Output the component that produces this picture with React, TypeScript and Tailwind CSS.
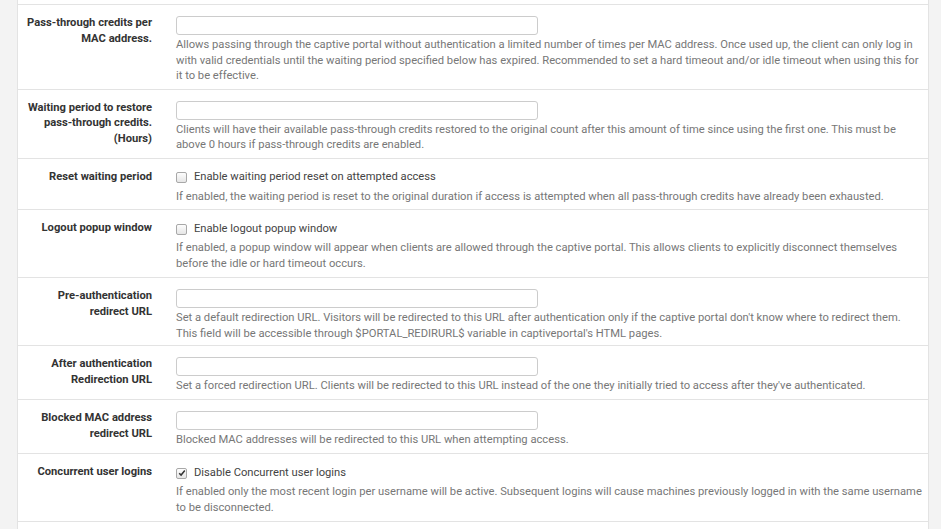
import React from "react";

type Row = {
  label: string;
  kind: "input" | "checkbox";
  checkText?: string;
  checked?: boolean;
  pb: string;
  help: string;
};

const rows: Row[] = [
  {
    label: "Pass-through credits per MAC address.",
    kind: "input",
    pb: "pb-[5px]",
    help: "Allows passing through the captive portal without authentication a limited number of times per MAC address. Once used up, the client can only log in with valid credentials until the waiting period specified below has expired. Recommended to set a hard timeout and/or idle timeout when using this for it to be effective.",
  },
  {
    label: "Waiting period to restore pass-through credits. (Hours)",
    kind: "input",
    pb: "pb-[5px]",
    help: "Clients will have their available pass-through credits restored to the original count after this amount of time since using the first one. This must be above 0 hours if pass-through credits are enabled.",
  },
  {
    label: "Reset waiting period",
    kind: "checkbox",
    checkText: "Enable waiting period reset on attempted access",
    pb: "pb-[5px]",
    help: "If enabled, the waiting period is reset to the original duration if access is attempted when all pass-through credits have already been exhausted.",
  },
  {
    label: "Logout popup window",
    kind: "checkbox",
    checkText: "Enable logout popup window",
    pb: "pb-[6px]",
    help: "If enabled, a popup window will appear when clients are allowed through the captive portal. This allows clients to explicitly disconnect themselves before the idle or hard timeout occurs.",
  },
  {
    label: "Pre-authentication redirect URL",
    kind: "input",
    pb: "pb-[4px]",
    help: "Set a default redirection URL. Visitors will be redirected to this URL after authentication only if the captive portal don't know where to redirect them. This field will be accessible through $PORTAL_REDIRURL$ variable in captiveportal's HTML pages.",
  },
  {
    label: "After authentication Redirection URL",
    kind: "input",
    pb: "pb-[5.5px]",
    help: "Set a forced redirection URL. Clients will be redirected to this URL instead of the one they initially tried to access after they've authenticated.",
  },
  {
    label: "Blocked MAC address redirect URL",
    kind: "input",
    pb: "pb-[5.5px]",
    help: "Blocked MAC addresses will be redirected to this URL when attempting access.",
  },
  {
    label: "Concurrent user logins",
    kind: "checkbox",
    checkText: "Disable Concurrent user logins",
    checked: true,
    pb: "pb-[6px]",
    help: "If enabled only the most recent login per username will be active. Subsequent logins will cause machines previously logged in with the same username to be disconnected.",
  },
];

function Checkbox({ checked }: { checked?: boolean }) {
  return (
    <span className="w-[11px] h-[11px] rounded-[2px] border border-[#a8a8a8] bg-gradient-to-b from-[#fdfdfd] to-[#e6e6e6] flex items-center justify-center shrink-0">
      {checked && (
        <svg width="8" height="8" viewBox="0 0 8 8">
          <path d="M1.2 4.2 L3.1 6.1 L6.8 1.6" fill="none" stroke="#333" strokeWidth="1.5" />
        </svg>
      )}
    </span>
  );
}

export default function App() {
  return (
    <div
      className="h-[529px] w-[941px] overflow-hidden bg-[#f3f3f3] flex"
      style={{ fontFamily: "Roboto, 'Liberation Sans', sans-serif" }}
    >
      <div className="ml-[17px] w-[912px] bg-white border-x border-[#e3e3e3] flex flex-col">
        <div className="h-[5px] shrink-0 border-b border-[#e3e3e3]" />
        {rows.map((r, i) => (
          <div key={i} className="flex border-b border-[#e3e3e3] shrink-0">
            {/* label */}
            <div className="w-[134px] pl-[4px] pt-[10px] text-right text-[11.2px] leading-[15.5px] font-bold text-[#333] shrink-0">
              {r.label}
            </div>

            {/* control + help */}
            <div className={`ml-[24px] w-[748px] pt-[11px] ${r.pb}`}>
              {r.kind === "input" ? (
                <div className="w-[362px] h-[19px] border border-[#cccccc] rounded-[3px] bg-white" />
              ) : (
                <div className="flex items-center gap-[7px] h-[16px] text-[11.2px] text-[#444]">
                  <Checkbox checked={r.checked} />
                  <span>{r.checkText}</span>
                </div>
              )}
              <p
                className={`${
                  r.kind === "input" ? "mt-[2px]" : "mt-[3px]"
                } text-[11.2px] leading-[15.5px] text-[#777]`}
              >
                {r.help}
              </p>
            </div>
          </div>
        ))}
        <div className="flex-1" />
      </div>
    </div>
  );
}
